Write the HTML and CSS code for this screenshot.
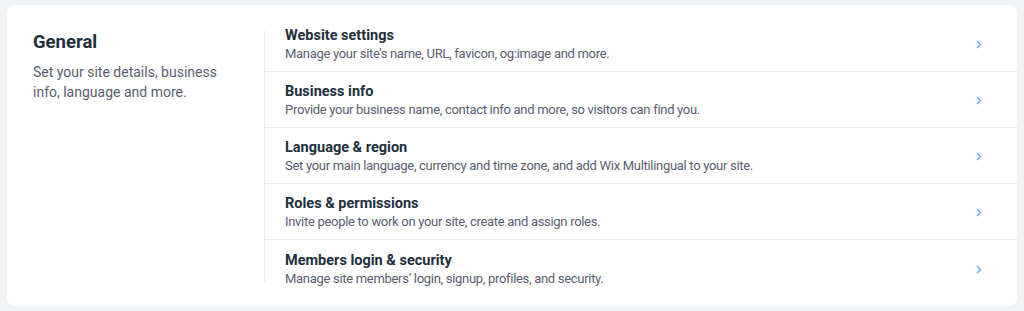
FILE: index.html
```html
<!DOCTYPE html>
<html lang="en">
<head>
  <meta charset="UTF-8">
  <meta name="viewport" content="width=device-width, initial-scale=1.0">
  <title>General Settings</title>
  <link rel="stylesheet" href="styles.css">
</head>
<body>
  <div class="settings-card">
    <div class="section-intro">
      <h2 class="section-title">General</h2>
      <p class="section-text">Set your site details, business info, language and more.</p>
    </div>
    <div class="section-divider"></div>
    <ul class="settings-list">
      <li class="settings-item">
        <div class="item-text">
          <p class="item-title">Website settings</p>
          <p class="item-desc">Manage your site’s name, URL, favicon, og:image and more.</p>
        </div>
        <svg class="item-arrow" width="6" height="9" viewBox="0 0 6 9"><path d="M1 1l3.5 3.5L1 8" fill="none" stroke="currentColor" stroke-width="1.3"/></svg>
      </li>
      <li class="settings-item">
        <div class="item-text">
          <p class="item-title">Business info</p>
          <p class="item-desc">Provide your business name, contact info and more, so visitors can find you.</p>
        </div>
        <svg class="item-arrow" width="6" height="9" viewBox="0 0 6 9"><path d="M1 1l3.5 3.5L1 8" fill="none" stroke="currentColor" stroke-width="1.3"/></svg>
      </li>
      <li class="settings-item">
        <div class="item-text">
          <p class="item-title">Language &amp; region</p>
          <p class="item-desc">Set your main language, currency and time zone, and add Wix Multilingual to your site.</p>
        </div>
        <svg class="item-arrow" width="6" height="9" viewBox="0 0 6 9"><path d="M1 1l3.5 3.5L1 8" fill="none" stroke="currentColor" stroke-width="1.3"/></svg>
      </li>
      <li class="settings-item">
        <div class="item-text">
          <p class="item-title">Roles &amp; permissions</p>
          <p class="item-desc">Invite people to work on your site, create and assign roles.</p>
        </div>
        <svg class="item-arrow" width="6" height="9" viewBox="0 0 6 9"><path d="M1 1l3.5 3.5L1 8" fill="none" stroke="currentColor" stroke-width="1.3"/></svg>
      </li>
      <li class="settings-item">
        <div class="item-text">
          <p class="item-title">Members login &amp; security</p>
          <p class="item-desc">Manage site members’ login, signup, profiles, and security.</p>
        </div>
        <svg class="item-arrow" width="6" height="9" viewBox="0 0 6 9"><path d="M1 1l3.5 3.5L1 8" fill="none" stroke="currentColor" stroke-width="1.3"/></svg>
      </li>
    </ul>
  </div>
</body>
</html>
```

FILE: styles.css
```css
body {
  margin: 0;
  padding: 5px 7px 6px 7px;
  background-color: #f0f4f7;
  font-family: Roboto, Arial, sans-serif;
  color: #20303c;
}

.settings-card {
  display: flex;
  background: #ffffff;
  border-radius: 8px;
  padding: 11px 0 10px 0;
}

.section-intro {
  width: 231px;
  padding: 14px 0 0 26px;
  box-sizing: content-box;
}

.section-title {
  margin: 0;
  font-size: 18.5px;
  line-height: 24px;
  font-weight: 700;
  color: #20303c;
}

.section-text {
  max-width: 200px;
  margin: 8px 0 0 0;
  font-size: 14px;
  line-height: 20px;
  color: #595d70;
}

.section-divider {
  width: 1px;
  background: #e7ebef;
  margin: 15px 0 14px 0;
}

.settings-list {
  flex: 1;
  list-style: none;
  margin: 0;
  padding: 0;
}

.settings-item {
  display: flex;
  align-items: center;
  height: 56px;
  padding: 2px 35px 0 20px;
  box-sizing: border-box;
  border-bottom: 1px solid #e7ebef;
}

.settings-item:last-child {
  border-bottom: none;
}

.item-text {
  flex: 1;
}

.item-title {
  margin: 0;
  font-size: 14.5px;
  line-height: 18px;
  font-weight: 700;
  color: #20303c;
}

.item-desc {
  margin: 0;
  font-size: 13px;
  line-height: 17px;
  letter-spacing: -0.3px;
  color: #595d70;
}

.item-arrow {
  color: #5fa3ff;
  flex-shrink: 0;
}
```
